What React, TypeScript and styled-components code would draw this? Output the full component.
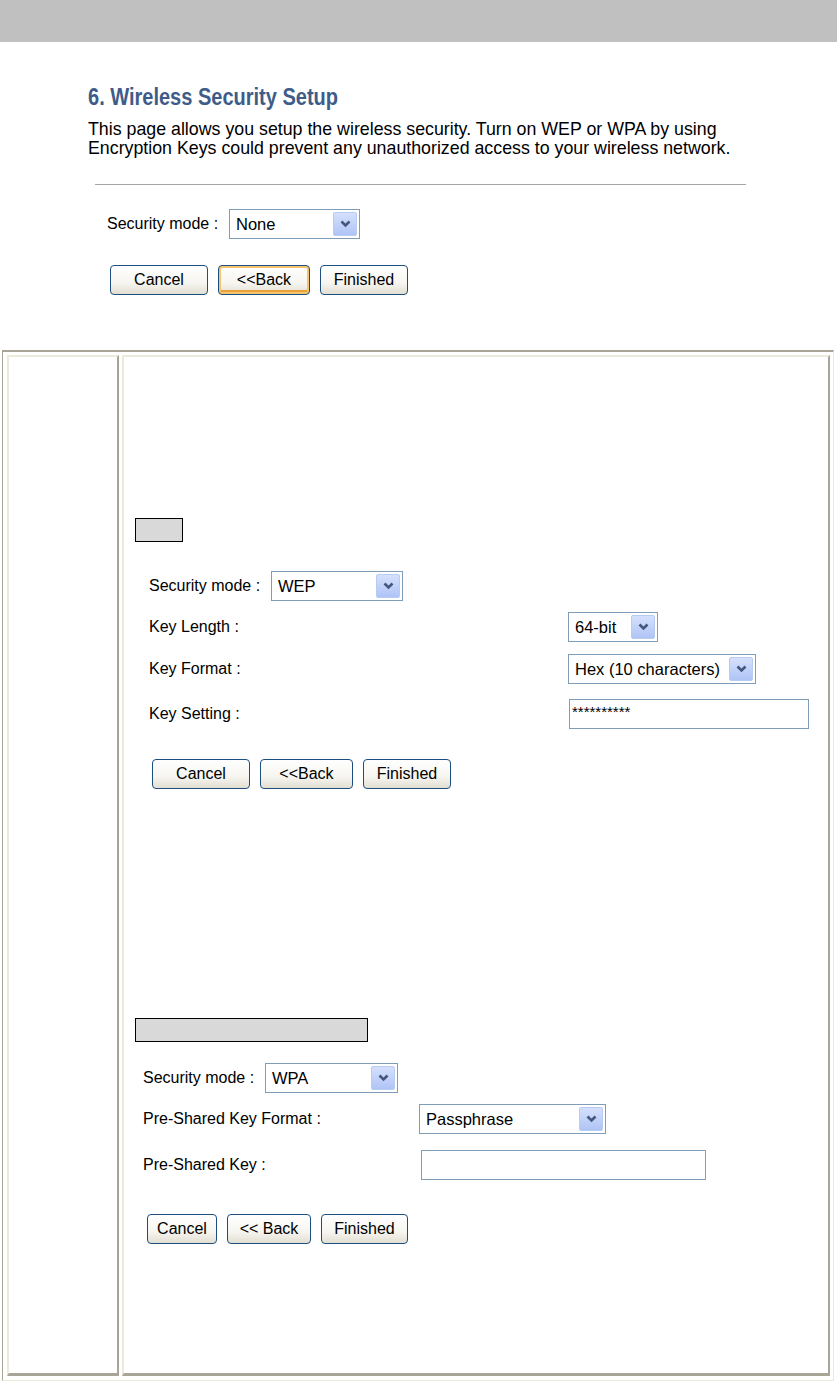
import React from "react";
import styled, { createGlobalStyle, css } from "styled-components";

const GlobalStyle = createGlobalStyle`
  html, body {
    margin: 0;
    padding: 0;
    background: #ffffff;
  }
  body {
    font-family: "Liberation Sans", Arial, sans-serif;
    color: #000;
  }
`;

const Page = styled.main`
  width: 837px;
  height: 1381px;
  overflow: hidden;
`;

const TopBar = styled.div`
  height: 42px;
  background: #c0c0c0;
`;

const Intro = styled.section`
  box-sizing: border-box;
  padding: 42px 0 0 88px;
  height: 308px;
`;

const Title = styled.h2`
  margin: 0;
  font-family: "Liberation Sans", Arial, sans-serif;
  font-weight: 700;
  font-size: 23px;
  line-height: 26px;
  color: #3e5c89;
  white-space: nowrap;
  transform: scaleX(0.87);
  transform-origin: left center;
`;

const Lead = styled.p`
  margin: 10px 0 0;
  font-size: 17.8px;
  line-height: 19px;
  width: 700px;
`;

const Rule = styled.hr`
  margin: 26px 0 0 7px;
  width: 651px;
  border: 0;
  height: 1px;
  background: #a5a5a5;
`;

const ModeRow = styled.div<{ $left: number; $top: number }>`
  display: grid;
  grid-template-columns: 122px auto;
  align-items: center;
  height: 30px;
  margin-top: ${({ $top }) => $top}px;
  margin-left: ${({ $left }) => $left}px;
`;

const FieldRow = styled.div<{ $left: number; $top: number; $labelWidth: number }>`
  display: grid;
  grid-template-columns: ${({ $labelWidth }) => $labelWidth}px auto;
  align-items: center;
  height: 30px;
  margin-top: ${({ $top }) => $top}px;
  margin-left: ${({ $left }) => $left}px;
`;

const Label = styled.span`
  font-size: 16px;
  white-space: nowrap;
`;

const SelectBox = styled.div<{ $width: number }>`
  box-sizing: border-box;
  width: ${({ $width }) => $width}px;
  height: 30px;
  border: 1px solid #7f9db9;
  background: #fff;
  display: flex;
  align-items: center;
  justify-content: space-between;
  padding: 2px 2px 2px 6px;
  font-size: 16.5px;
  white-space: nowrap;
`;

const ArrowButton = styled.span`
  box-sizing: border-box;
  flex: none;
  width: 24px;
  height: 24px;
  border: 1px solid #b8cbf3;
  border-radius: 2px;
  background: linear-gradient(#d5e0fc, #afc4f6);
  display: flex;
  align-items: center;
  justify-content: center;
`;

const TextBox = styled.div<{ $width: number }>`
  box-sizing: border-box;
  width: ${({ $width }) => $width}px;
  height: 30px;
  border: 1px solid #7f9db9;
  background: #fff;
  padding: 0 2px 6px;
  display: flex;
  align-items: center;
  font-size: 15px;
`;

const ButtonRow = styled.div<{ $left: number; $top: number }>`
  display: flex;
  gap: 10px;
  margin-top: ${({ $top }) => $top}px;
  margin-left: ${({ $left }) => $left}px;
`;

const XpButton = styled.button<{ $width: number; $focused?: boolean }>`
  box-sizing: border-box;
  width: ${({ $width }) => $width}px;
  height: 30px;
  padding: 0;
  border: 1px solid #1c4e80;
  border-radius: 4px;
  background: linear-gradient(#ffffff 0%, #f6f5f0 60%, #e2dfd2 100%);
  font-family: "Liberation Sans", Arial, sans-serif;
  font-size: 16px;
  color: #000;
  ${({ $focused }) =>
    $focused &&
    css`
      box-shadow: inset 0 0 0 2px #f6c46e, inset 0 -2px 0 2px #e9a235;
    `}
`;

const Frame = styled.div`
  box-sizing: border-box;
  margin: 0 0 0 2px;
  width: 832px;
  height: 1031px;
  border-top: 2px solid #a8a596;
  border-left: 1px solid #a8a596;
  border-right: 1px solid #eceadb;
  border-bottom: 1px solid #eceadb;
  padding: 3px 3px 4px 4px;
  display: grid;
  grid-template-columns: 112px 1fr;
  gap: 3px;
`;

const Cell = styled.div`
  box-sizing: border-box;
  border-top: 2px solid #eceadb;
  border-left: 2px solid #eceadb;
  border-right: 2px solid #a8a596;
  border-bottom: 3px solid #a8a596;
`;

const ContentCell = styled(Cell)`
  padding: 0;
`;

const Caption = styled.div<{ $width: number; $top: number }>`
  box-sizing: border-box;
  width: ${({ $width }) => $width}px;
  height: 24px;
  margin: ${({ $top }) => $top}px 0 0 11px;
  border: 1px solid #000;
  background: #d9d9d9;
`;

const Chevron = () => (
  <svg width="11" height="8" viewBox="0 0 11 8">
    <path d="M1.5 1.5 L5.5 5.5 L9.5 1.5" fill="none" stroke="#44577c" strokeWidth="2.6" />
  </svg>
);

const Select: React.FC<{ width: number; value: string }> = ({ width, value }) => (
  <SelectBox $width={width}>
    <span>{value}</span>
    <ArrowButton>
      <Chevron />
    </ArrowButton>
  </SelectBox>
);

export default function App() {
  return (
    <>
      <GlobalStyle />
      <Page>
        <TopBar />
        <Intro>
          <Title>6. Wireless Security Setup</Title>
          <Lead>
            This page allows you setup the wireless security. Turn on WEP or WPA by using
            <br />
            Encryption Keys could prevent any unauthorized access to your wireless network.
          </Lead>
          <Rule />
          <ModeRow $left={19} $top={24}>
            <Label>Security mode :</Label>
            <Select width={131} value="None" />
          </ModeRow>
          <ButtonRow $left={22} $top={26}>
            <XpButton $width={98}>Cancel</XpButton>
            <XpButton $width={92} $focused>
              &lt;&lt;Back
            </XpButton>
            <XpButton $width={88}>Finished</XpButton>
          </ButtonRow>
        </Intro>

        <Frame>
          <Cell />
          <ContentCell>
            <Caption $width={48} $top={161} />
            <ModeRow $left={25} $top={29}>
              <Label>Security mode :</Label>
              <Select width={132} value="WEP" />
            </ModeRow>
            <FieldRow $left={25} $top={11} $labelWidth={419}>
              <Label>Key Length :</Label>
              <Select width={90} value="64-bit" />
            </FieldRow>
            <FieldRow $left={25} $top={12} $labelWidth={419}>
              <Label>Key Format :</Label>
              <Select width={188} value="Hex (10 characters)" />
            </FieldRow>
            <FieldRow $left={25} $top={15} $labelWidth={420}>
              <Label>Key Setting :</Label>
              <TextBox $width={240}>**********</TextBox>
            </FieldRow>
            <ButtonRow $left={28} $top={30}>
              <XpButton $width={98}>Cancel</XpButton>
              <XpButton $width={93}>&lt;&lt;Back</XpButton>
              <XpButton $width={88}>Finished</XpButton>
            </ButtonRow>

            <Caption $width={233} $top={229} />
            <ModeRow $left={19} $top={21}>
              <Label>Security mode :</Label>
              <Select width={133} value="WPA" />
            </ModeRow>
            <FieldRow $left={19} $top={11} $labelWidth={276}>
              <Label>Pre-Shared Key Format :</Label>
              <Select width={187} value="Passphrase" />
            </FieldRow>
            <FieldRow $left={19} $top={16} $labelWidth={278}>
              <Label>Pre-Shared Key :</Label>
              <TextBox $width={285} />
            </FieldRow>
            <ButtonRow $left={23} $top={34}>
              <XpButton $width={70}>Cancel</XpButton>
              <XpButton $width={84}>&lt;&lt; Back</XpButton>
              <XpButton $width={87}>Finished</XpButton>
            </ButtonRow>
          </ContentCell>
        </Frame>
      </Page>
    </>
  );
}
